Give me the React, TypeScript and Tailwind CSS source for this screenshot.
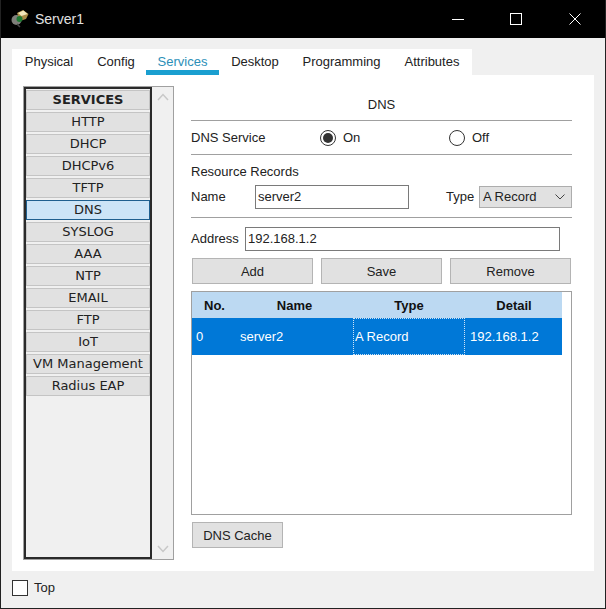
const FONT_UI = "font-['Liberation_Sans',Arial,sans-serif]"

const TABS = [
  { label: 'Physical', w: 'w-[74px]' },
  { label: 'Config', w: 'w-[60px]' },
  { label: 'Services', w: 'w-[73px]', active: true },
  { label: 'Desktop', w: 'w-[72px]' },
  { label: 'Programming', w: 'w-[101px]' },
  { label: 'Attributes', w: 'w-[80px]' },
]

const SERVICES = ['HTTP', 'DHCP', 'DHCPv6', 'TFTP', 'DNS', 'SYSLOG', 'AAA', 'NTP', 'EMAIL', 'FTP', 'IoT', 'VM Management', 'Radius EAP']

function ServerIcon() {
  return (
    <svg width="20" height="20" viewBox="0 0 20 20" className="mt-[-2px]">
      <ellipse cx="6.5" cy="12" rx="5" ry="5" fill="#7f7f7a" />
      <path d="M7 5 L13 2 L18.5 6 L16 11 L10 13 Z" fill="#a98b45" />
      <path d="M8 5 L13.5 2.5 L17.5 6 L11.5 8 Z" fill="#f3e7bb" />
      <circle cx="9.5" cy="11" r="3" fill="#1f7a33" />
      <path d="M7 16 L10 19" stroke="#4a4a4a" strokeWidth="1.5" />
    </svg>
  )
}

function TitleBar() {
  return (
    <div className="flex h-[38px] shrink-0 items-center bg-black text-white">
      <div className="ml-[9px] flex items-center">
        <ServerIcon />
      </div>
      <span className="ml-[5px] text-[14px] text-[#e0e0e0]">Server1</span>
      <div className="ml-auto flex items-center">
        <svg width="12" height="12" viewBox="0 0 12 12" className="mr-[46px]">
          <path d="M0 6.5 H12" stroke="#fff" strokeWidth="1" />
        </svg>
        <svg width="12" height="12" viewBox="0 0 12 12" className="mr-[47px]">
          <rect x="0.5" y="0.5" width="11" height="11" fill="none" stroke="#fff" />
        </svg>
        <svg width="12" height="12" viewBox="0 0 12 12" className="mr-[24px]">
          <path d="M0.5 0.5 L11.5 11.5 M11.5 0.5 L0.5 11.5" stroke="#fff" strokeWidth="1" />
        </svg>
      </div>
    </div>
  )
}

function Tabs() {
  return (
    <div className="flex h-[26px] w-[460px] bg-white text-[13px] text-[#222]">
      {TABS.map((t) => (
        <div
          key={t.label}
          className={`${t.w} pt-[5px] text-center leading-[16px] ${t.active ? 'border-b-[5px] border-[#1a9fd0] text-[#2c8fb8]' : ''}`}
        >
          {t.label}
        </div>
      ))}
    </div>
  )
}

function Sidebar() {
  return (
    <div className="flex h-[474px] w-[151px] border border-[#a0a0a0] bg-[#f0f0f0]">
      <div className="flex w-[128px] flex-col gap-[2px] border-2 border-[#2a2a2a] pt-[1px] font-['DejaVu_Sans',Verdana,sans-serif] text-[13px] text-[#222]">
        <div className="flex h-[20px] items-center justify-center border border-[#c4c4c4] bg-[#e1e1e1] font-bold">SERVICES</div>
        {SERVICES.map((s) => (
          <div
            key={s}
            className={`flex h-[20px] items-center justify-center border ${s === 'DNS' ? 'border-[#1f5f8f] bg-[#cce4f7]' : 'border-[#c4c4c4] bg-[#e1e1e1]'}`}
          >
            {s}
          </div>
        ))}
      </div>
      <div className="flex flex-1 flex-col items-center justify-between py-[6px]">
        <svg width="12" height="8" viewBox="0 0 12 8">
          <path d="M1 7 L6 1.5 L11 7" fill="none" stroke="#c8c8c8" strokeWidth="1.5" />
        </svg>
        <svg width="12" height="8" viewBox="0 0 12 8">
          <path d="M1 1 L6 6.5 L11 1" fill="none" stroke="#c8c8c8" strokeWidth="1.5" />
        </svg>
      </div>
    </div>
  )
}

function Radio({ checked }: { checked?: boolean }) {
  return (
    <span className="flex h-4 w-4 items-center justify-center rounded-full border border-[#333]">
      {checked && <span className="h-[10px] w-[10px] rounded-full bg-[#333]" />}
    </span>
  )
}

function Btn({ label, w }: { label: string; w: string }) {
  return (
    <div className={`flex h-[26px] ${w} items-center justify-center border border-[#b4b4b4] bg-[#e1e1e1] pt-[1px] text-[13px] text-[#222]`}>
      {label}
    </div>
  )
}

function DnsPanel() {
  return (
    <div className="ml-[17px] flex w-[381px] flex-col text-[13px] text-[#222]">
      <div className="flex h-[27px] items-center justify-center border-b border-[#a0a0a0] pb-[4px]">DNS</div>
      <div className="flex h-[34px] items-center border-b border-[#a0a0a0]">
        <span className="w-[129px] pt-[1px]">DNS Service</span>
        <Radio checked />
        <span className="ml-[7px] w-[106px] pt-[1px]">On</span>
        <Radio />
        <span className="ml-[7px] pt-[1px]">Off</span>
      </div>
      <div className="flex h-[63px] flex-col border-b border-[#a0a0a0]">
        <div className="mt-[8px] h-[18px] leading-[18px]">Resource Records</div>
        <div className="mt-[4px] flex items-center">
          <span className="w-[64px]">Name</span>
          <div className="flex h-[24px] w-[154px] items-center border border-[#7a7a7a] pl-[2px]">server2</div>
          <span className="ml-[37px] w-[33px]">Type</span>
          <div className="flex h-[22px] w-[93px] items-center justify-between border border-[#adadad] bg-[#e1e1e1] pl-[3px] pr-[6px]">
            <span>A Record</span>
            <svg width="10" height="6" viewBox="0 0 10 6">
              <path d="M0.5 0.5 L5 5 L9.5 0.5" fill="none" stroke="#444" />
            </svg>
          </div>
        </div>
      </div>
      <div className="mt-[9px] flex items-center">
        <span className="w-[54px]">Address</span>
        <div className="flex h-[24px] w-[315px] items-center border border-[#7a7a7a] pl-[2px]">192.168.1.2</div>
      </div>
      <div className="mt-[7px] ml-[1px] flex gap-[8px]">
        <Btn label="Add" w="w-[121px]" />
        <Btn label="Save" w="w-[121px]" />
        <Btn label="Remove" w="w-[121px]" />
      </div>
      <div className="mt-[7px] h-[224px] border border-[#a0a0a0]">
        <div className="flex h-[26px] w-[370px] items-center bg-[#bcd9f2] pt-[1px] font-bold text-[#111]">
          <span className="w-[45px] text-center">No.</span>
          <span className="w-[115px] text-center">Name</span>
          <span className="w-[114px] text-center">Type</span>
          <span className="w-[96px] text-center">Detail</span>
        </div>
        <div className="flex h-[37px] w-[370px] items-center bg-[#0078d7] text-white">
          <span className="w-[48px] pl-[4px]">0</span>
          <span className="w-[113px]">server2</span>
          <span className="flex h-full w-[112px] items-center border border-dotted border-[#cfe3f5] pl-[1px]">A Record</span>
          <span className="w-[97px] pl-[5px]">192.168.1.2</span>
        </div>
      </div>
      <div className="mt-[7px] ml-[1px]">
        <Btn label="DNS Cache" w="w-[91px]" />
      </div>
    </div>
  )
}

export default function App() {
  return (
    <div className={`flex h-[609px] w-[606px] flex-col border-x border-b border-[#222] bg-[#f0f0f0] ${FONT_UI}`}>
      <TitleBar />
      <div className="ml-[11px] mt-[11px]">
        <Tabs />
      </div>
      <div className="ml-[11px] flex h-[496px] w-[582px] bg-white pl-[11px] pt-[11px]">
        <Sidebar />
        <div className="mt-[8px]">
          <DnsPanel />
        </div>
      </div>
      <div className="ml-[11px] mt-[7px] flex items-center text-[13px] text-[#222]">
        <span className="h-[16px] w-[16px] border border-[#333] bg-white" />
        <span className="ml-[6px]">Top</span>
      </div>
    </div>
  )
}
